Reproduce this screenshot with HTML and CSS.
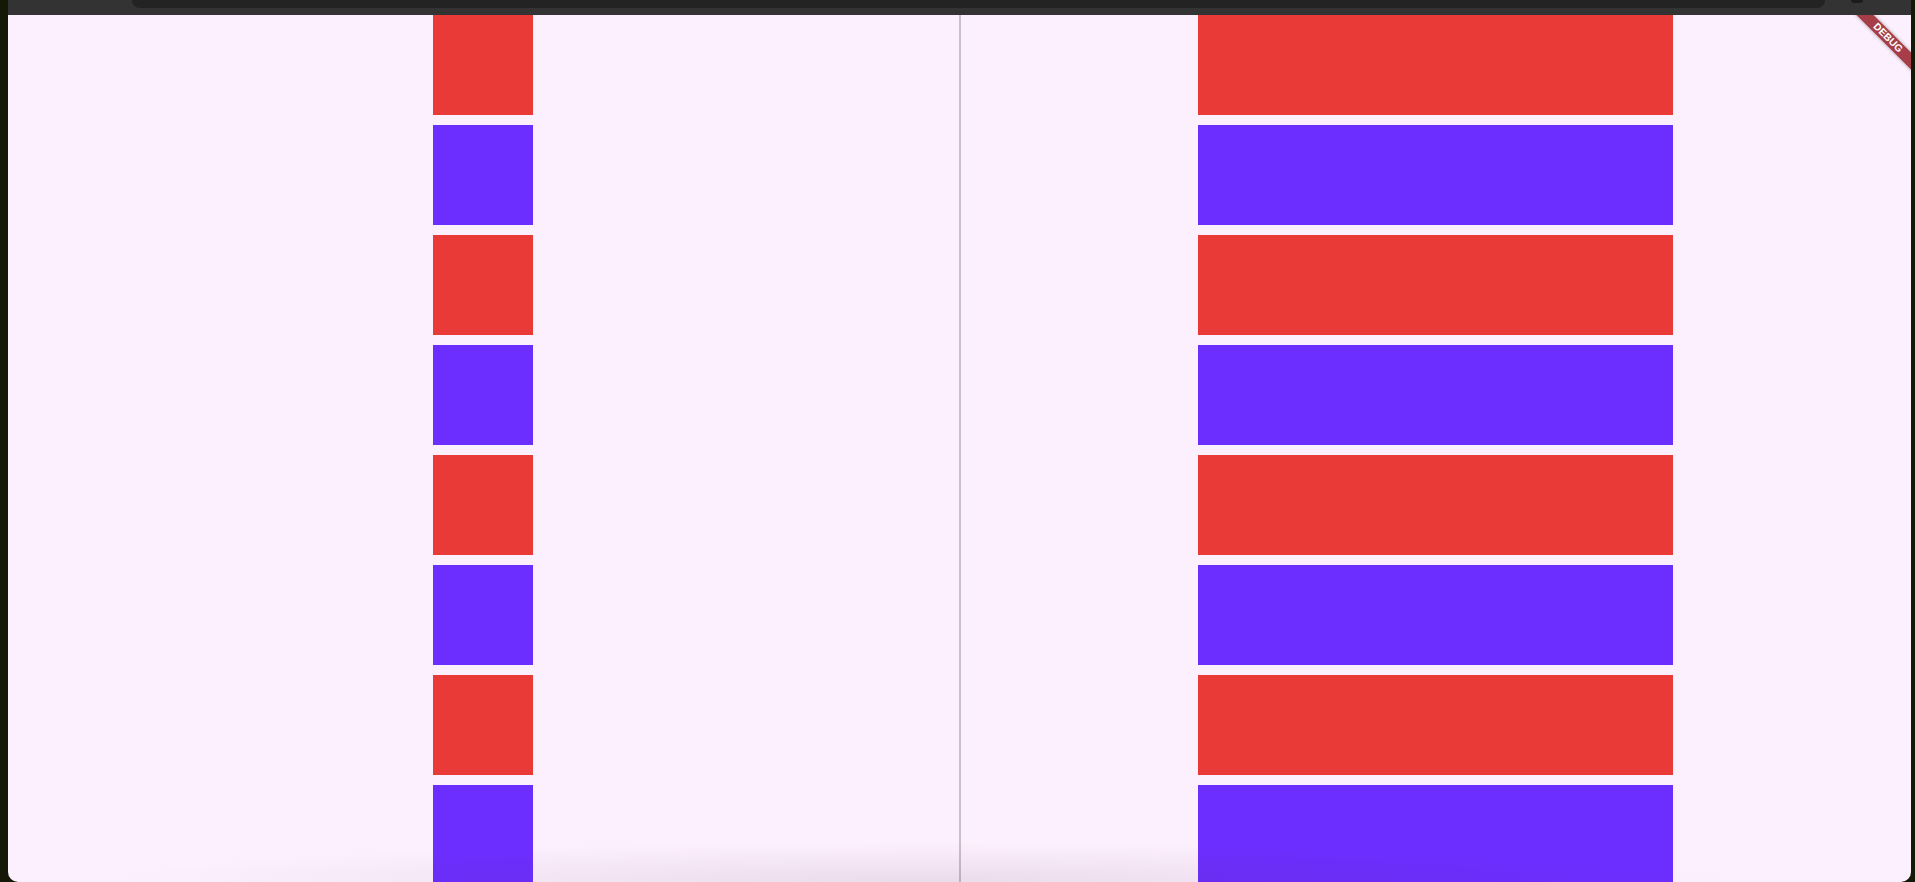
FILE: index.html
```html
<!DOCTYPE html>
<html lang="en">
<head>
  <meta charset="UTF-8" />
  <meta name="viewport" content="width=device-width, initial-scale=1.0"/>
  <title>List Demo</title>
  <link rel="stylesheet" href="styles.css">
</head>
<body>

  <div class="window">
    <div class="toolbar">
      <div class="toolbar-field"></div>
      <div class="toolbar-dot"></div>
    </div>

    <div class="app">
      <div class="pane">
        <div class="list list-fixed" id="leftList">
          <!-- JavaScript will populate boxes -->
        </div>
      </div>
      <div class="divider"></div>
      <div class="pane">
        <div class="list list-wide" id="rightList">
          <!-- JavaScript will populate boxes -->
        </div>
      </div>

      <div class="debug-banner">DEBUG</div>
      <div class="bottom-shade"></div>
    </div>
  </div>

  <script>
    const lists = [document.getElementById('leftList'), document.getElementById('rightList')];

    lists.forEach(list => {
      for (let i = 0; i < 10; i++) {
        const box = document.createElement('div');
        box.className = i % 2 === 0 ? 'box red' : 'box purple';
        list.appendChild(box);
      }
    });
  </script>

</body>
</html>
```

FILE: styles.css
```css
html, body {
  margin: 0;
  height: 100%;
}
body {
  background: #141806;
  font-family: 'Liberation Sans', Arial, sans-serif;
  overflow: hidden;
}
.window {
  margin-left: 8px;
  width: 1903px;
  height: 882px;
  display: flex;
  flex-direction: column;
  background: #fdf0fe;
  border-radius: 0 0 10px 10px;
  overflow: hidden;
}
.toolbar {
  height: 15px;
  flex-shrink: 0;
  background: #333333;
  display: flex;
  align-items: flex-start;
}
.toolbar-field {
  margin-left: 124px;
  width: 1693px;
  height: 8px;
  background: #232323;
  border-radius: 0 0 9px 9px;
}
.toolbar-dot {
  margin-left: 26px;
  width: 12px;
  height: 3px;
  background: #1c1c1c;
  border-radius: 0 0 6px 6px;
}
.app {
  position: relative;
  flex: 1;
  display: flex;
  overflow: hidden;
}
.pane {
  flex: 1;
  overflow: hidden;
}
.divider {
  width: 2px;
  background: #c7bfc9;
}
.list {
  display: flex;
  flex-direction: column;
  align-items: center;
  gap: 10px;
}
.box {
  height: 100px;
  flex-shrink: 0;
}
.list-fixed .box {
  width: 100px;
}
.list-wide .box {
  width: 50%;
}
.red {
  background: #e93a37;
}
.purple {
  background: #6c2eff;
}
.debug-banner {
  position: absolute;
  top: 17px;
  right: -27px;
  width: 100px;
  height: 12px;
  line-height: 12px;
  transform: rotate(45deg);
  background: #a63d47;
  box-shadow: 0 0 4px rgba(0,0,0,0.35);
  color: white;
  font-size: 10px;
  font-weight: bold;
  text-align: center;
  letter-spacing: 0.2px;
}
.bottom-shade {
  position: absolute;
  left: 0;
  right: 0;
  bottom: 0;
  height: 50px;
  pointer-events: none;
  background: radial-gradient(ellipse 820px 40px at 48% 100%, rgba(70,40,70,0.1), rgba(70,40,70,0));
}
```
